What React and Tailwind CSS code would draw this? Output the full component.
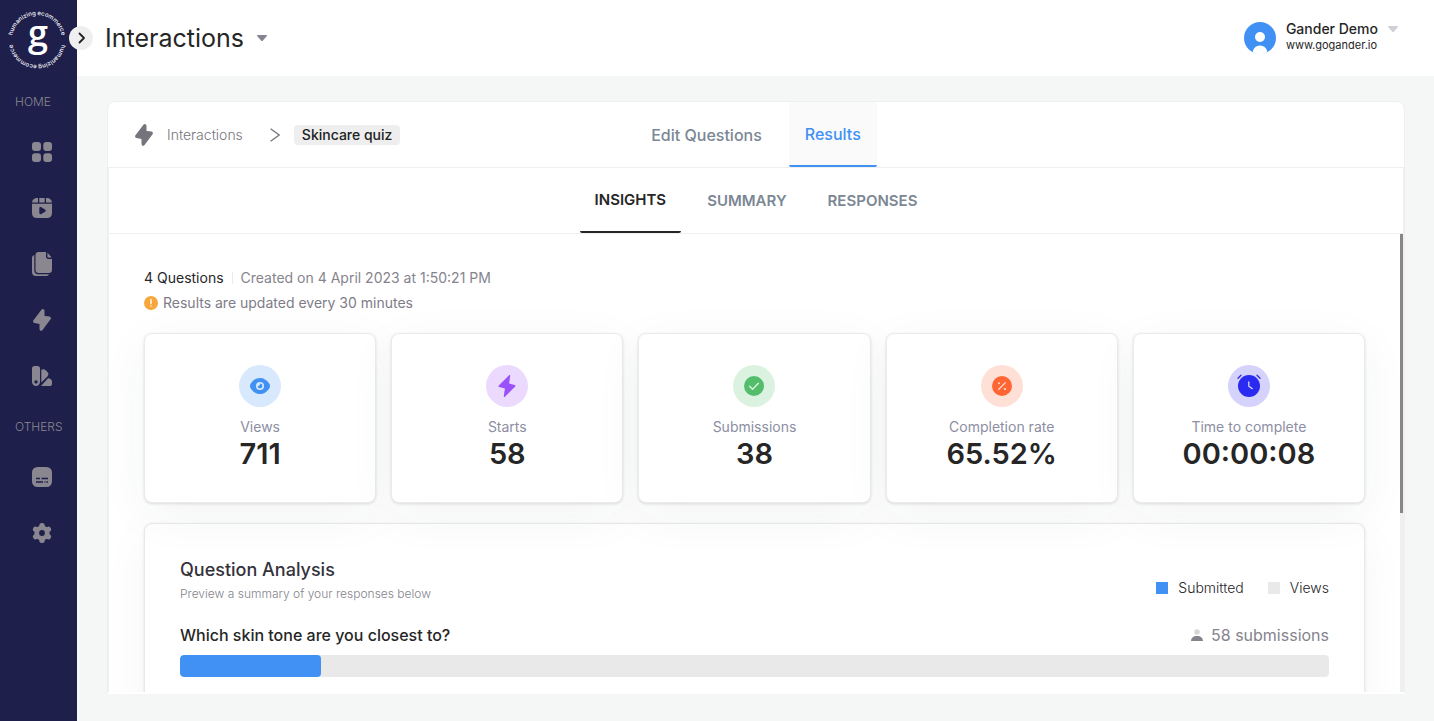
import React from "react";

function GridIcon() {
  return (
    <svg width="20" height="20" viewBox="0 0 20 20" fill="currentColor" aria-hidden="true">
      <rect x="0" y="0" width="9" height="9" rx="3" />
      <rect x="11.3" y="0" width="8.7" height="9" rx="3" />
      <rect x="0" y="11.3" width="9" height="8.7" rx="3" />
      <rect x="11.3" y="11.3" width="8.7" height="8.7" rx="3" />
    </svg>
  );
}

function ReelIcon() {
  return (
    <svg width="20" height="20" viewBox="0 0 20 20" fill="currentColor" aria-hidden="true">
      <path d="M6 0v4.4H0C.4 1.8 2.300 0 5 0zM7.300 0h5.400v4.400H7.300zM14 0h1c2.700 0 4.600 1.800 5 4.400h-6z" />
      <path
        fillRule="evenodd"
        d="M0 5.800h20V15c0 3.200-1.800 5-5 5H5c-3.200 0-5-1.800-5-5zM7.300 10.200v4.600c0 1.300 1 1.800 2.100 1.200l3.600-2.200c1-.6 1-1.800 0-2.400L9.400 9.200c-1.100-.7-2.100-.2-2.100 1z"
      />
    </svg>
  );
}

function PagesIcon() {
  return (
    <svg width="20" height="24" viewBox="0 0 20 24" fill="currentColor" aria-hidden="true">
      <path d="M6.500 0H14v4.500C14 6 15 7 16.500 7H20v11c0 1.800-1.200 3-3 3H6.500c-1.800 0-3-1.200-3-3V3c0-1.800 1.200-3 3-3z" />
      <path d="M15.400.6 19.700 5.600h-3c-.8 0-1.300-.5-1.300-1.300z" />
      <path d="M2.300 3v15.500c0 2.200 1.500 3.700 3.700 3.700h11c-.5 1.100-1.500 1.800-2.800 1.800H4c-2.500 0-4-1.500-4-4V6c0-1.500.9-2.600 2.300-3z" />
    </svg>
  );
}

function BoltIcon() {
  return (
    <svg width="18" height="22" viewBox="0 0 18 22" fill="currentColor" stroke="currentColor" strokeWidth="3.400" strokeLinejoin="round" aria-hidden="true">
      <path d="M9.800 1.900V8.400L16.200 9.300 8.200 20.100V13.600L1.800 12.300z" />
    </svg>
  );
}

function SwatchIcon() {
  return (
    <svg width="20" height="20" viewBox="0 0 20 20" fill="currentColor" aria-hidden="true">
      <path
        fillRule="evenodd"
        d="M2.500 0h3C7.100 0 8 1 8 2.500V16c0 2.300-1.700 4-4 4s-4-1.700-4-4V2.500C0 1 1 0 2.500 0zM4 14.200a1.700 1.700 0 1 0 0 3.400 1.700 1.700 0 0 0 0-3.400z"
      />
      <path d="M9.300 3.800c1.500-.9 3-.9 4.200.3l1.900 2c1.400 1.400 1.300 3 0 4.300l-6.100 6z" />
      <path d="M9 20l7-7.700c1.800-.2 4 1.200 4 3.200v2.200c0 1.400-.9 2.300-2.300 2.300z" />
    </svg>
  );
}

function CaptionIcon() {
  return (
    <svg width="20" height="20" viewBox="0 0 20 20" aria-hidden="true">
      <rect width="20" height="20" rx="5.500" fill="currentColor" />
      <path d="M4 11.500h4M9.500 11.500H16M4 15h7M12.500 15h1M14.500 15H16" stroke="#1e1f4b" strokeWidth="1.300" />
    </svg>
  );
}

function GearIcon() {
  const teeth = [0, 60, 120];
  return (
    <svg width="20" height="20" viewBox="0 0 20 20" aria-hidden="true">
      <circle cx="10" cy="10" r="7.600" fill="currentColor" />
      {teeth.map((a) => (
        <rect key={a} x="7.300" y="0" width="5.400" height="20" rx="2.500" fill="currentColor" transform={`rotate(${a} 10 10)`} />
      ))}
      <circle cx="10" cy="10" r="2.900" fill="#1e1f4b" />
    </svg>
  );
}

function Logo() {
  return (
    <svg width="64" height="64" viewBox="0 0 64 64" role="img" aria-label="Gander" className="text-white">
      <defs>
        <path id="ring-top" d="M7 32a25 25 0 0 1 50 0" />
        <path id="ring-bottom" d="M57 32a25 25 0 0 1-50 0" />
      </defs>
      <g fill="currentColor" className="font-['Inter',sans-serif] text-[6px] font-medium">
        <text textAnchor="middle">
          <textPath href="#ring-top" startOffset="50%">humanizing ecommerce</textPath>
        </text>
        <text textAnchor="middle">
          <textPath href="#ring-bottom" startOffset="50%">humanizing ecommerce</textPath>
        </text>
      </g>
      <text x="33" y="38" textAnchor="middle" fill="currentColor" className="font-['Open_Sans',sans-serif] text-[36px] font-semibold">
        g
      </text>
    </svg>
  );
}

function NavItem({ label, children }) {
  return (
    <a href="#" aria-label={label} className="flex h-14 items-center justify-center pl-[7px]">
      {children}
    </a>
  );
}

function Sidebar() {
  return (
    <aside className="w-[77px] shrink-0 bg-[#1e1f4b] text-[#8a8791]">
      <a href="#" className="flex h-20 items-center pl-[5px]">
        <Logo />
      </a>
      <nav>
        <p className="flex h-11 items-center pl-[15px] text-xs font-light">HOME</p>
        <NavItem label="Dashboard"><GridIcon /></NavItem>
        <NavItem label="Videos"><ReelIcon /></NavItem>
        <NavItem label="Pages"><PagesIcon /></NavItem>
        <NavItem label="Interactions"><BoltIcon /></NavItem>
        <NavItem label="Themes"><SwatchIcon /></NavItem>
        <p className="flex h-[45px] items-center pl-[15px] text-xs font-light">OTHERS</p>
        <NavItem label="Captions"><CaptionIcon /></NavItem>
        <NavItem label="Settings"><GearIcon /></NavItem>
      </nav>
    </aside>
  );
}

function Caret() {
  return (
    <svg width="10" height="6" viewBox="0 0 10 6" fill="currentColor" aria-hidden="true">
      <path d="M.8 0h8.400c.7 0 1 .7.500 1.200L5.700 5.700a1 1 0 0 1-1.400 0L.3 1.200C-.2.700.1 0 .8 0z" />
    </svg>
  );
}

function TopBar() {
  return (
    <header className="relative flex h-[76px] shrink-0 items-center justify-between bg-white pr-9 pl-7">
      <button aria-label="Expand menu" className="absolute top-[26px] -left-2 flex size-6 items-center justify-center rounded-full bg-[#efefef]">
        <svg width="12" height="12" viewBox="0 0 12 12" fill="none" stroke="#202223" strokeWidth="1.800" strokeLinecap="round" strokeLinejoin="round" aria-hidden="true">
          <path d="M4.500 1.500 9 6l-4.500 4.500" />
        </svg>
      </button>
      <button className="flex items-center gap-[13px] text-[#858490]">
        <h1 className="text-[25px] leading-8 text-[#262626]">Interactions</h1>
        <Caret />
      </button>
      <button className="flex items-center gap-[10px] text-left">
        <svg width="32" height="32" viewBox="0 0 32 32" aria-hidden="true">
          <defs>
            <clipPath id="avatar"><circle cx="16" cy="16" r="16" /></clipPath>
          </defs>
          <g clipPath="url(#avatar)">
            <rect width="32" height="32" fill="#4191f5" />
            <circle cx="16" cy="15" r="5" fill="#fff" />
            <path d="M8.500 32c0-5 3-8.500 7.500-8.500s7.500 3.500 7.500 8.500z" fill="#fff" />
            <rect y="30.500" width="32" height="2" fill="#fff" />
          </g>
        </svg>
        <span className="flex flex-col pb-[2px]">
          <span className="flex items-center gap-[10px] text-[#d0cfd5]">
            <span className="text-sm leading-4 font-medium text-[#262626]">Gander Demo</span>
            <Caret />
          </span>
          <span className="text-[11px] leading-4 text-[#262626]">www.gogander.io</span>
        </span>
      </button>
    </header>
  );
}

function PanelHeader() {
  return (
    <div className="flex h-[66px] shrink-0 border-b border-[#efefef]">
      <div className="flex flex-1 items-center pl-[27px] text-sm">
        <span className="text-[#75747d]"><BoltIcon /></span>
        <a href="#" className="ml-[14px] font-light text-[#75747d]">Interactions</a>
        <svg className="ml-[27px]" width="10" height="14" viewBox="0 0 10 14" fill="none" stroke="#75747d" strokeWidth="1.300" aria-hidden="true">
          <path d="M.6.7 9.200 7 .6 13.300" />
        </svg>
        <span className="ml-[14px] rounded bg-[#eeeeee] px-2 leading-5 font-medium text-[#202223]">Skincare quiz</span>
      </div>
      <div className="flex gap-[11px] text-base font-medium" role="tablist" aria-label="Quiz">
        <button role="tab" aria-selected="false" className="px-4 text-[#7b8794]">Edit Questions</button>
        <button role="tab" aria-selected="true" className="rounded-b-xs border-b-2 border-[#4191f5] bg-[#fafafa] px-4 text-[#4191f5]">Results</button>
      </div>
      <div className="flex-1 pl-[27px]" />
    </div>
  );
}

function SubTabs() {
  return (
    <div className="flex h-[66px] shrink-0 justify-center gap-[11px] border-b border-[#efefef] text-[15px] font-semibold" role="tablist" aria-label="Results">
      <button role="tab" aria-selected="true" className="rounded-b-xs border-b-2 border-[#262626] px-[15px] pt-[2px] text-[#262626]">INSIGHTS</button>
      <button role="tab" aria-selected="false" className="px-[15px] pt-[2px] text-[#7b8794]">SUMMARY</button>
      <button role="tab" aria-selected="false" className="px-[15px] pt-[2px] text-[#7b8794]">RESPONSES</button>
    </div>
  );
}

const stats = [
  {
    label: "Views",
    value: "711",
    tint: "bg-[#d9e9fd]",
    icon: (
      <svg width="20" height="16" viewBox="0 0 20 16" aria-hidden="true">
        <path d="M10 0c3.800 0 6.700 2 8.900 5.100 1.500 2 1.500 3.800 0 5.800C16.700 14 13.800 16 10 16s-6.700-2-8.900-5.100c-1.500-2-1.500-3.800 0-5.800C3.300 2 6.200 0 10 0z" fill="#4191f5" />
        <circle cx="10" cy="8" r="4" fill="#d9e9fd" />
        <path d="M10 5.600A2.400 2.400 0 1 1 7.600 8C8.900 8.500 10.400 7.200 10 5.600z" fill="#4191f5" />
      </svg>
    ),
  },
  {
    label: "Starts",
    value: "58",
    tint: "bg-[#ebdafe]",
    icon: (
      <svg width="18" height="22" viewBox="0 0 18 22" fill="#9b51fa" aria-hidden="true">
        <path d="M10.800.4c.7-.8 1.600-.4 1.400.7l-1.100 7.500 5.600 1.300c.8.200 1.100.9.500 1.500L7.200 21.600c-.7.800-1.600.4-1.400-.7l1.100-7.500-5.600-1.300c-.8-.2-1.100-.9-.5-1.500z" />
      </svg>
    ),
  },
  {
    label: "Submissions",
    value: "38",
    tint: "bg-[#dbf2e1]",
    icon: (
      <svg width="20" height="20" viewBox="0 0 20 20" aria-hidden="true">
        <circle cx="10" cy="10" r="10" fill="#53bd6b" />
        <path d="M5.600 10.200l3 3 5.800-5.900" fill="none" stroke="#dbf2e1" strokeWidth="1.400" strokeLinecap="round" strokeLinejoin="round" />
      </svg>
    ),
  },
  {
    label: "Completion rate",
    value: "65.52%",
    tint: "bg-[#ffe0d6]",
    icon: (
      <svg width="20" height="20" viewBox="0 0 20 20" aria-hidden="true">
        <circle cx="10" cy="10" r="10" fill="#ff6633" />
        <path d="M6.800 13.200l6.600-6.600" stroke="#ffe0d6" strokeWidth="1.300" strokeLinecap="round" />
        <circle cx="7" cy="7.200" r="1" fill="#ffe0d6" />
        <circle cx="13" cy="13" r="1.100" fill="#ffe0d6" />
      </svg>
    ),
  },
  {
    label: "Time to complete",
    value: "00:00:08",
    tint: "bg-[#d5d2fb]",
    icon: (
      <svg width="24" height="24" viewBox="0 0 24 24" fill="none" strokeLinecap="round" strokeLinejoin="round" aria-hidden="true">
        <circle cx="12" cy="12" r="11" fill="#2a2af0" />
        <path d="M1 4.300l3-3M23 4.300l-3-3" stroke="#2a2af0" strokeWidth="1.300" />
        <path d="M11.800 8v4.200l3.400 2.400" stroke="#d5d2fb" strokeWidth="1.300" />
      </svg>
    ),
  },
];

function StatCard({ label, value, tint, icon }) {
  return (
    <article className="flex h-[170px] flex-col items-center rounded-lg border border-[#ebebeb] bg-white pt-[31px] shadow-[0_1px_3px_rgba(0,0,0,0.12),0_12px_50px_rgba(30,50,50,0.05)]">
      <div className={`flex size-[42px] items-center justify-center rounded-full ${tint}`}>{icon}</div>
      <p className="mt-[10px] text-sm leading-5 text-[#8c8ea3]">{label}</p>
      <p className="text-[29px] leading-[34px] font-semibold text-[#262626]">{value}</p>
    </article>
  );
}

function QuestionAnalysis() {
  return (
    <section className="mt-5 h-[320px] rounded-lg border border-[#e9e9e9] bg-white px-[35px] pt-[34px] shadow-[0_1px_3px_rgba(0,0,0,0.10),0_12px_50px_rgba(30,50,50,0.04)]">
      <div className="flex items-end justify-between">
        <div>
          <h2 className="text-lg leading-6 font-medium text-[#33323b]">Question Analysis</h2>
          <p className="text-xs leading-6 font-light text-[#85848d]">Preview a summary of your responses below</p>
        </div>
        <ul className="flex gap-6 pb-2 text-sm leading-5 font-light text-[#262626]">
          <li className="flex items-center gap-[10px]"><span className="size-3 bg-[#4191f5]" />Submitted</li>
          <li className="flex items-center gap-[10px]"><span className="size-3 bg-[#e9e9e9]" />Views</li>
        </ul>
      </div>
      <div className="mt-[17px] flex items-center justify-between text-base leading-6">
        <h3 className="font-medium text-[#262626]">Which skin tone are you closest to?</h3>
        <p className="flex items-center gap-2 text-[#85848d]">
          <svg width="12" height="12" viewBox="0 0 12 12" aria-hidden="true">
            <circle cx="6" cy="3" r="2.800" fill="#d6d6d9" />
            <path d="M0 12c0-3 2.300-5 6-5s6 2 6 5z" fill="#85848d" />
          </svg>
          58 submissions
        </p>
      </div>
      <div className="mt-2 h-[22px] overflow-hidden rounded bg-[#e9e9e9]">
        <div className="h-full rounded bg-[#4191f5]" style={{ width: `${(141 / 1149) * 100}%` }} />
      </div>
    </section>
  );
}

export default function App() {
  return (
    <div className="flex h-screen bg-[#f5f7f6] font-['Inter',sans-serif]">
      <Sidebar />
      <div className="flex min-w-0 flex-1 flex-col">
        <TopBar />
        <main className="flex min-h-0 flex-1 flex-col pt-[25px] pr-[29px] pb-[27px] pl-[30px]">
          <div className="flex min-h-0 flex-1 flex-col rounded-t-lg border border-b-2 border-[#efefef] border-b-white bg-white">
            <PanelHeader />
            <div className="flex min-h-0 flex-1 flex-col border-x border-[#efefef]">
              <SubTabs />
              <div className="flex min-h-0 flex-1">
                <div className="min-w-0 flex-1 overflow-y-auto px-[35px] pt-[34px] [scrollbar-width:none]">
                  <div className="flex items-center text-sm leading-5">
                    <p className="text-[#262626]">4 Questions</p>
                    <p className="ml-2 border-l border-[#ebebeb] pl-2 leading-3 text-[#85848d]">Created on 4 April 2023 at 1:50:21 PM</p>
                  </div>
                  <p className="mt-[5px] flex items-center gap-[5px] text-sm leading-5 text-[#7e7c88]">
                    <svg width="14" height="14" viewBox="0 0 14 14" aria-hidden="true">
                      <circle cx="7" cy="7" r="7" fill="#f6a83c" />
                      <path d="M7 3.500v4.200M7 9.800v.4" stroke="#fff" strokeWidth="1.300" strokeLinecap="round" />
                    </svg>
                    Results are updated every 30 minutes
                  </p>
                  <section className="relative mt-5 grid grid-cols-5 gap-[15px]">
                    {stats.map((s) => (
                      <StatCard key={s.label} {...s} />
                    ))}
                  </section>
                  <QuestionAnalysis />
                </div>
                <div className="w-[3px] bg-[#efefef]">
                  <div className="h-[61%] bg-[#878787]" />
                </div>
              </div>
            </div>
          </div>
        </main>
      </div>
    </div>
  );
}
